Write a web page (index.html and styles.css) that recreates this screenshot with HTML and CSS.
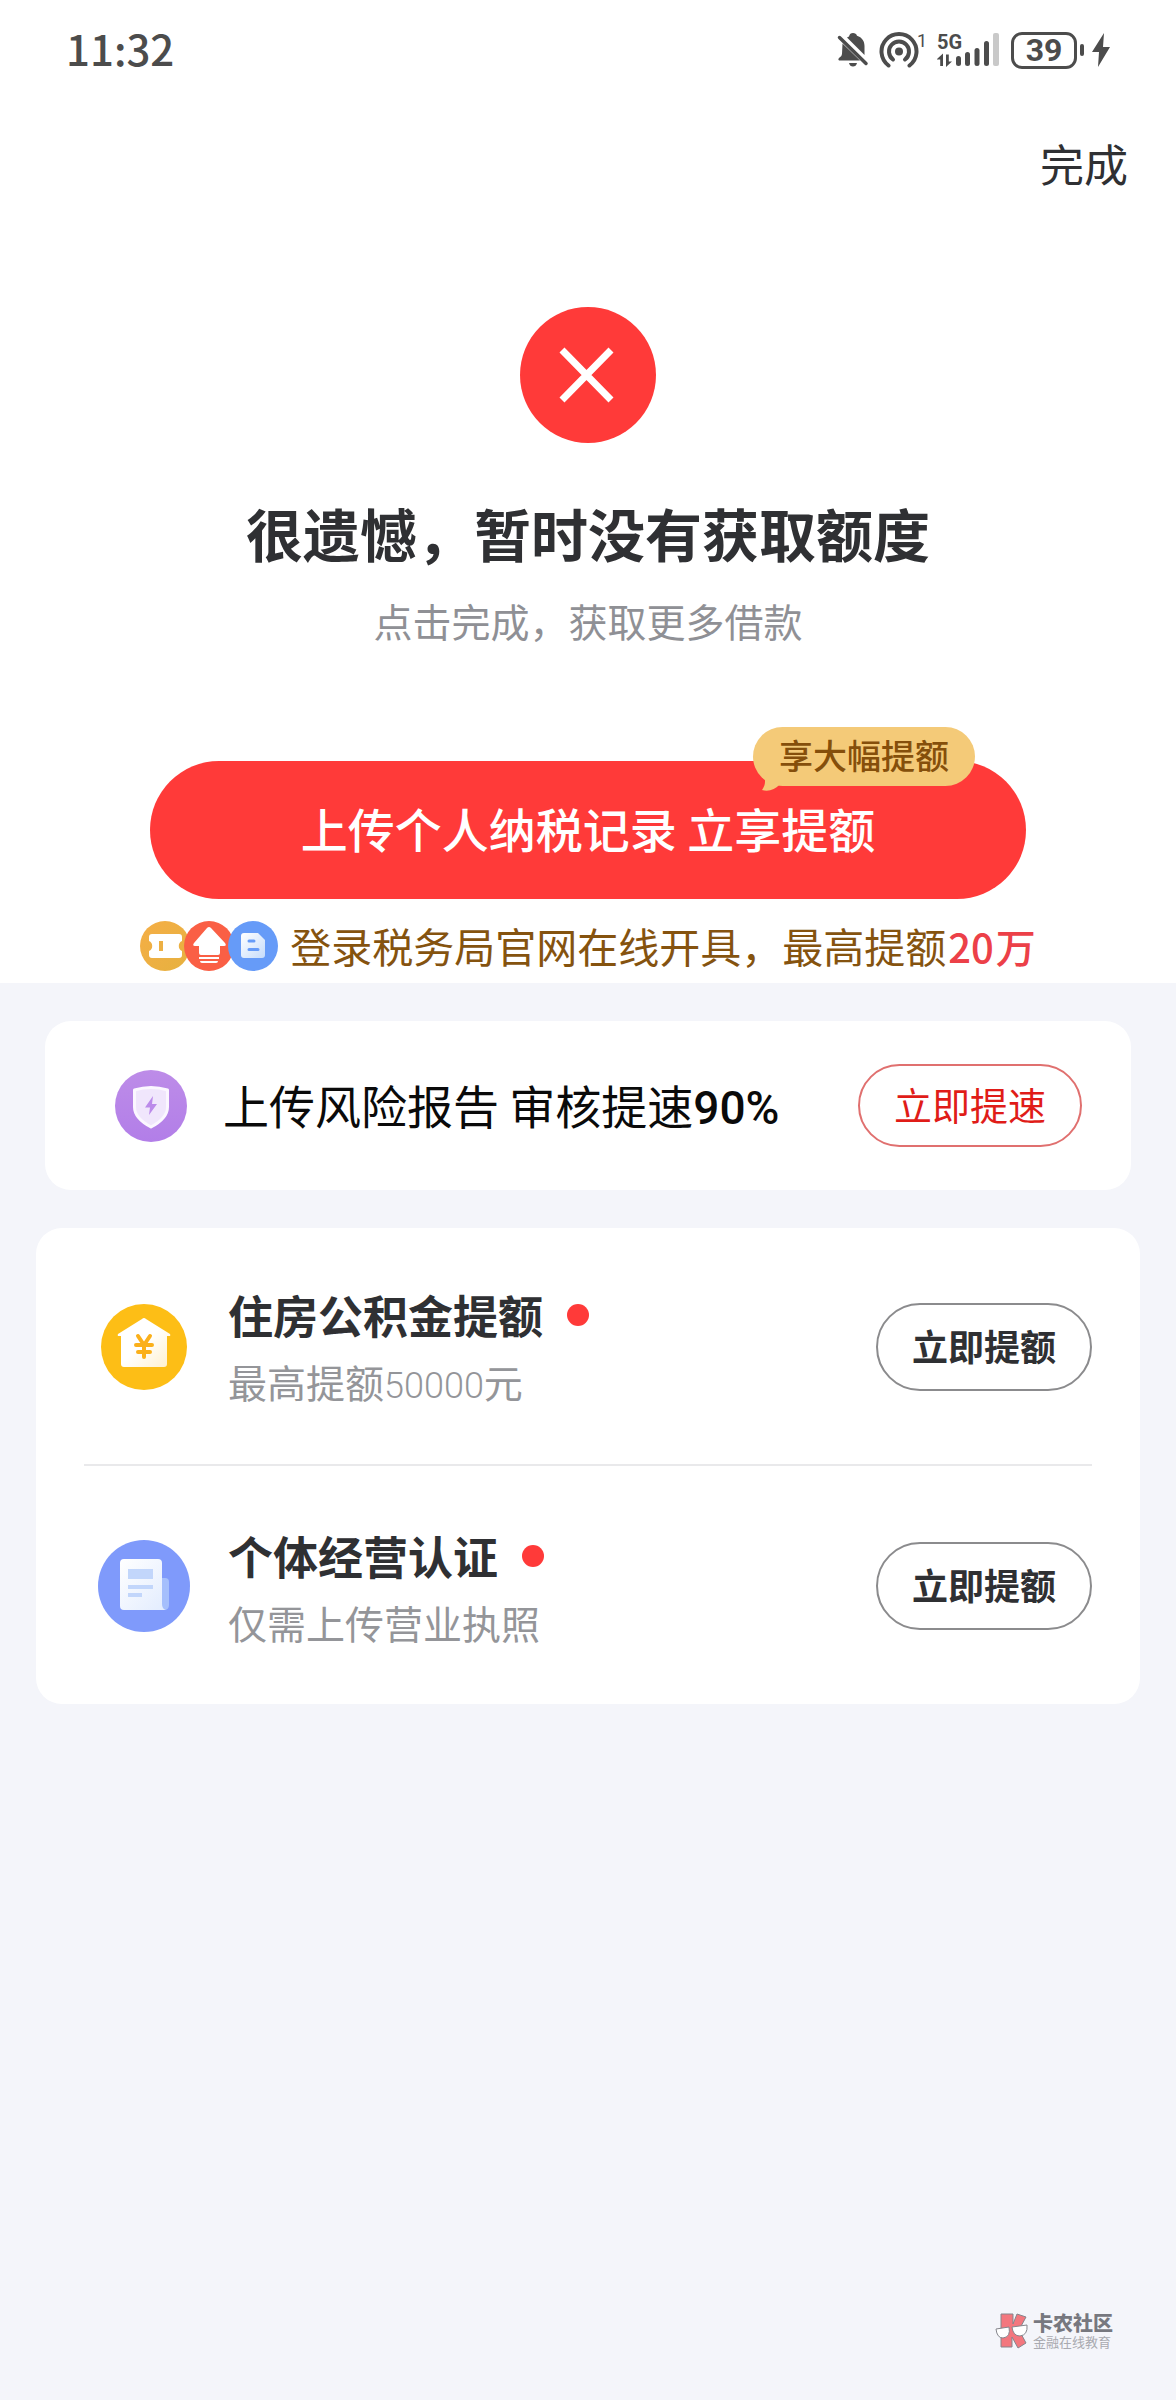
FILE: index.html
```html
<!DOCTYPE html>
<html lang="zh-CN">
<head>
<meta charset="utf-8">
<meta name="viewport" content="width=device-width, initial-scale=1">
<title>额度结果</title>
<link rel="stylesheet" href="styles.css">
</head>
<body>
<div class="page">
  <section class="hero">
    <div class="status">
      <span class="clock">11:32</span>
      <div class="indicators">
        <svg class="bell" width="32" height="36" viewBox="0 0 32 36" aria-hidden="true">
          <path fill="#4c4c4c" d="M12 4.500C12.500 2 14 1 16 1s3.500 1 4 2.800c5 1.500 7.500 5.500 7.500 10.200v9L10 5.500zM5.500 11.500 23 28.500H2q-1.500-1.500 0-2.500 3-1.500 3-4zM12 31h8c-.5 2.500-2 3.500-4 3.500S12.500 33.500 12 31z"/>
          <path stroke="#4c4c4c" stroke-width="3.500" stroke-linecap="round" d="M2.500 5.500 29 31.500"/>
        </svg>
        <svg class="hotspot" width="50" height="44" viewBox="0 -4 50 44" aria-hidden="true">
          <g fill="none" stroke="#4c4c4c" stroke-width="4" stroke-linecap="round">
            <path d="M9.500 33.500A17.500 17.500 0 1 1 30.500 33.500"/>
            <path d="M14 27.500A10 10 0 1 1 26 27.500"/>
          </g>
          <circle cx="20" cy="19.500" r="4" fill="#4c4c4c"/>
          <text x="38" y="15" class="tiny-one">1</text>
        </svg>
        <svg class="signal" width="64" height="44" viewBox="0 -4 64 44" aria-hidden="true">
          <text x="0" y="17" class="net">5G</text>
          <path fill="#4c4c4c" d="M0 27l6-5.500V34H3.200v-6.500H0zM15 29.500 9 35V22.500h2.800v7z"/>
          <g fill="#4c4c4c"><rect x="19" y="24" width="5" height="10" rx="2.500"/><rect x="28" y="20" width="5" height="14" rx="2.500"/><rect x="37.500" y="16" width="5" height="18" rx="2.500"/><rect x="47" y="9" width="5" height="25" rx="2.500"/></g>
          <rect x="56" y="1" width="6" height="33" rx="2" fill="#c9c9c9"/>
        </svg>
        <span class="battery">39</span>
        <span class="battery-cap"></span>
        <svg class="bolt" width="18" height="36" viewBox="0 0 18 36" aria-hidden="true"><path fill="#4c4c4c" d="M12 1 0 20h7L6 35 18 15h-7z"/></svg>
      </div>
    </div>
    <nav class="topbar"><button class="done" type="button">完成</button></nav>
    <svg class="fail" width="136" height="136" viewBox="0 0 136 136" aria-hidden="true">
      <circle cx="68" cy="68" r="68" fill="#ff3a39"/>
      <path stroke="#fff" stroke-width="7" d="M42 43 91 93M91 43 42 93"/>
    </svg>
    <h1 class="title">很遗憾，暂时没有获取额度</h1>
    <p class="subtitle">点击完成，获取更多借款</p>
    <div class="cta-wrap">
      <button class="cta" type="button">上传个人纳税记录 立享提额</button>
      <span class="bubble">享大幅提额
        <svg class="tail" width="20" height="16" viewBox="0 0 20 16" aria-hidden="true"><path fill="#f4ca78" d="M2 0c2 5 1 10-2 14 6 2 13 0 18-6V0z"/></svg>
      </span>
    </div>
    <div class="promo">
      <svg width="138" height="50" viewBox="0 0 138 50" aria-hidden="true">
        <defs>
          <linearGradient id="gold" x1="0" y1="0" x2="1" y2="1"><stop offset="0" stop-color="#f5ae46"/><stop offset="1" stop-color="#e6b13f"/></linearGradient>
          <linearGradient id="sky" x1="0" y1="0" x2="1" y2="1"><stop offset="0" stop-color="#fff"/><stop offset="1" stop-color="#c6dcfb"/></linearGradient>
        </defs>
        <circle cx="25" cy="25" r="25" fill="url(#gold)"/>
        <path fill="#fff" d="M12 13h27q3 0 3 3v4a5.500 5.500 0 0 0 0 10v4q0 3-3 3H12q-3 0-3-3v-4a5.500 5.500 0 0 0 0-10v-4q0-3 3-3z"/>
        <rect x="19" y="20" width="4" height="10" fill="#edb044"/>
        <circle cx="69" cy="25" r="25" fill="#fa5f45"/>
        <path fill="#fff" d="M67 7q2-2 4 0l14 15q2 3-1 3h-4v7q0 2-2 2H61q-2 0-2-2v-7h-4q-3 0-1-3zM59 36h20v2H59zM60 40h18q0 2-2 2H62q-2 0-2-2z"/>
        <circle cx="113" cy="25" r="25" fill="#669bf8"/>
        <path fill="url(#sky)" d="M104 12h14l7 7v15q0 3-3 3h-18q-3 0-3-3V15q0-3 3-3z"/>
        <path stroke="#669bf8" stroke-width="3" stroke-linecap="round" d="M109 20h5M109 28.500h9"/>
      </svg>
      <p class="promo-text">登录税务局官网在线开具，最高提额<strong class="amount">20<span>万</span></strong></p>
    </div>
  </section>

  <main class="cards">
    <section class="card report">
      <svg width="72" height="72" viewBox="0 0 72 72" aria-hidden="true">
        <defs><linearGradient id="violet" x1="0" y1="0" x2="0" y2="1"><stop offset="0" stop-color="#bd8ce8"/><stop offset="1" stop-color="#b27ee8"/></linearGradient></defs>
        <circle cx="36" cy="36" r="36" fill="url(#violet)"/>
        <path fill="#f0e6fc" stroke="#fbf7ff" stroke-width="3" stroke-linejoin="round" d="M19.500 20Q36 15 52.500 20v17c0 9-8 15.500-16.500 20-8.500-4.500-16.500-11-16.500-20z"/>
        <path fill="#bb8aea" d="M38 26 30 37.500h5L34 45l8-11h-5z"/>
      </svg>
      <p class="report-text">上传风险报告 审核提速<span class="percent">90%</span></p>
      <button class="pill pill-red" type="button">立即提速</button>
    </section>

    <ul class="card list">
      <li class="row">
        <span class="row-icon">
          <svg width="86" height="86" viewBox="0 0 86 86" aria-hidden="true">
            <defs><linearGradient id="cream" x1="0" y1="0" x2="1" y2="1"><stop offset=".5" stop-color="#fff"/><stop offset="1" stop-color="#fff0cc"/></linearGradient></defs>
            <circle cx="43" cy="43" r="43" fill="#fdbe16"/>
            <path fill="url(#cream)" d="M41 15q2-2 4 0l24 15q1 2-1 2h-2v28q0 3-3 3H23q-3 0-3-3V32h-2q-2 0-1-2z"/>
            <path fill="none" stroke="#fbb01a" stroke-width="4" stroke-linecap="round" d="M37 32l6 9 6-9M35 41h16M37 48h12M43 41v12"/>
          </svg>
        </span>
        <div class="row-body">
          <h2 class="row-title">住房公积金提额<i class="dot"></i></h2>
          <p class="row-sub">最高提额<span class="num">50000</span>元</p>
        </div>
        <button class="pill pill-dark" type="button">立即提额</button>
      </li>
      <li class="row">
        <span class="row-icon">
          <svg width="92" height="92" viewBox="0 0 92 92" aria-hidden="true">
            <defs><linearGradient id="sheet" x1="0" y1="0" x2="1" y2="1"><stop offset="0" stop-color="#fff"/><stop offset="1" stop-color="#e2ecfe"/></linearGradient></defs>
            <circle cx="46" cy="46" r="46" fill="#7f9afb"/>
            <path fill="#a5bffc" d="M62 38h5q4 0 4 4v23q0 5-5 5h-4z"/>
            <path fill="url(#sheet)" d="M26 19h34q4 0 4 4v41q0 5 4 6H26q-4 0-4-4V23q0-4 4-4z"/>
            <path fill="#c2d6fb" d="M30 29h25v10H30zM30 45h25v4H30zM30 53h14v4H30z"/>
          </svg>
        </span>
        <div class="row-body">
          <h2 class="row-title">个体经营认证<i class="dot"></i></h2>
          <p class="row-sub">仅需上传营业执照</p>
        </div>
        <button class="pill pill-dark" type="button">立即提额</button>
      </li>
    </ul>
  </main>

  <footer class="brand">
    <svg width="34" height="36" viewBox="0 0 34 36" aria-hidden="true">
      <g stroke="#85858c" stroke-width="1" stroke-linejoin="round">
        <path fill="#f3777e" d="M6 1h12v10l4-10 9 3-7 13 7 13-8 5-6-11v10H6z"/>
        <path fill="#fff" d="M1 16l13-2q2 10-6 11-6 0-7-9zM17 14l15-2q1 10-7 11-7 0-8-9z"/>
      </g>
    </svg>
    <div>
      <p class="brand-name">卡农社区</p>
      <p class="brand-sub">金融在线教育</p>
    </div>
  </footer>
</div>
</body>
</html>
```
FILE: styles.css
```css
* { box-sizing: border-box; }

body {
  margin: 0;
  background: #f4f5fa;
  color: #2f3033;
  font-family: "Noto Sans CJK SC", sans-serif;
}

h1, h2, p, ul { margin: 0; padding: 0; }
ul { list-style: none; }
svg { display: block; flex: none; }
button { font-family: inherit; padding: 0; cursor: pointer; }

.page {
  min-height: 100vh;
  display: flex;
  flex-direction: column;
}

.hero {
  background: #fff;
  display: flex;
  flex-direction: column;
  align-items: center;
}

/* Status bar */
.status {
  align-self: stretch;
  height: 100px;
  padding: 0 66px;
  display: flex;
  align-items: center;
  justify-content: space-between;
  color: #4c4c4c;
}
.clock { padding-bottom: 4px; font-size: 42px; font-weight: 500; line-height: 60px; }
.indicators { display: flex; align-items: center; }
.bell { margin-right: 10px; }
.hotspot { margin-right: 8px; }
.signal { margin-right: 10px; }
.tiny-one { font: 18px Roboto, sans-serif; fill: #4c4c4c; }
.net { font: 700 20px Roboto, sans-serif; fill: #4c4c4c; }
.battery {
  width: 66px;
  height: 37px;
  border: 3px solid #4c4c4c;
  border-radius: 11px;
  font: 700 32px/31px Roboto, sans-serif;
  text-align: center;
}
.battery-cap {
  width: 4px;
  height: 12px;
  margin: 0 8px 0 3px;
  border-radius: 2px;
  background: #4c4c4c;
}

.topbar {
  align-self: stretch;
  height: 130px;
  padding: 0 48px 4px;
  display: flex;
  align-items: center;
  justify-content: flex-end;
}
.done {
  border: 0;
  background: none;
  color: #2f3033;
  font-size: 44px;
  line-height: 64px;
}

/* Result */
.fail { margin-top: 77px; }
.title { margin-top: 49px; font-size: 57px; line-height: 80px; font-weight: 700; }
.subtitle { margin-top: 18px; font-size: 39px; line-height: 60px; color: #8f9095; font-weight: 400; }

.cta-wrap {
  position: relative;
  align-self: stretch;
  margin: 111px 150px 0;
}
.cta {
  width: 100%;
  height: 138px;
  padding-bottom: 6px;
  border: 0;
  border-radius: 69px;
  background: #ff3a39;
  color: #fff;
  font-size: 47px;
  font-weight: 500;
}
.bubble {
  position: absolute;
  top: -34px;
  right: 51px;
  padding: 0 26px 4px;
  border-radius: 30px;
  background: #f4ca78;
  color: #854f0b;
  font-size: 34px;
  font-weight: 500;
  line-height: 55px;
}
.tail { position: absolute; left: 9px; bottom: -6px; }

.promo {
  height: 84px;
  padding-top: 10px;
  display: flex;
  align-items: center;
  gap: 12px;
}
.promo-text { padding-bottom: 2px; font-size: 41px; line-height: 60px; color: #85530f; white-space: nowrap; }
.amount {
  margin-left: 2px;
  color: #ec4048;
  font-size: 40px;
  font-weight: 500;
}
.amount span { margin-left: 2px; }

/* Cards */
.cards {
  padding: 38px 36px;
  display: flex;
  flex-direction: column;
  gap: 38px;
}
.card { background: #fff; border-radius: 26px; }

.report {
  margin: 0 9px;
  height: 169px;
  padding: 0 49px 0 70px;
  display: flex;
  align-items: center;
}
.report-text {
  flex: 1;
  margin-left: 36px;
  color: #0a0a0a;
  font-size: 46px;
  line-height: 64px;
}
.percent { font-family: Roboto, sans-serif; font-weight: 500; }

.pill {
  flex: none;
  padding-bottom: 4px;
  border-radius: 44px;
  background: #fff;
}
.pill-red {
  width: 224px;
  height: 83px;
  border: 2px solid #e0706f;
  color: #e01c18;
  font-size: 38px;
}
.pill-dark {
  width: 216px;
  height: 88px;
  border: 2px solid #8b8b8d;
  color: #2f3033;
  font-size: 36px;
  font-weight: 700;
}

.list { padding: 0 48px; }
.row {
  height: 238px;
  padding-top: 2px;
  display: flex;
  align-items: center;
}
.row:not(:last-child) { border-bottom: 2px solid #e9e9eb; }
.row-icon {
  width: 120px;
  display: flex;
  justify-content: center;
}
.row-body { flex: 1; margin-left: 24px; padding-top: 6px; }
.row-title {
  display: flex;
  align-items: center;
  gap: 24px;
  font-size: 45px;
  line-height: 66px;
  font-weight: 700;
}
.dot { width: 22px; height: 22px; border-radius: 50%; background: #ff3a39; }
.row-sub { font-size: 39px; line-height: 66px; color: #949599; font-weight: 400; }
.num { font-family: Roboto, sans-serif; font-size: 36px; font-weight: 300; }

/* Brand mark */
.brand {
  margin-top: auto;
  padding: 0 63px 50px;
  display: flex;
  align-items: center;
  justify-content: flex-end;
  gap: 4px;
}
.brand-name { font-size: 20px; line-height: 22px; font-weight: 900; color: #77787f; }
.brand-sub { font-size: 13px; line-height: 16px; color: #a9aab0; }
```
